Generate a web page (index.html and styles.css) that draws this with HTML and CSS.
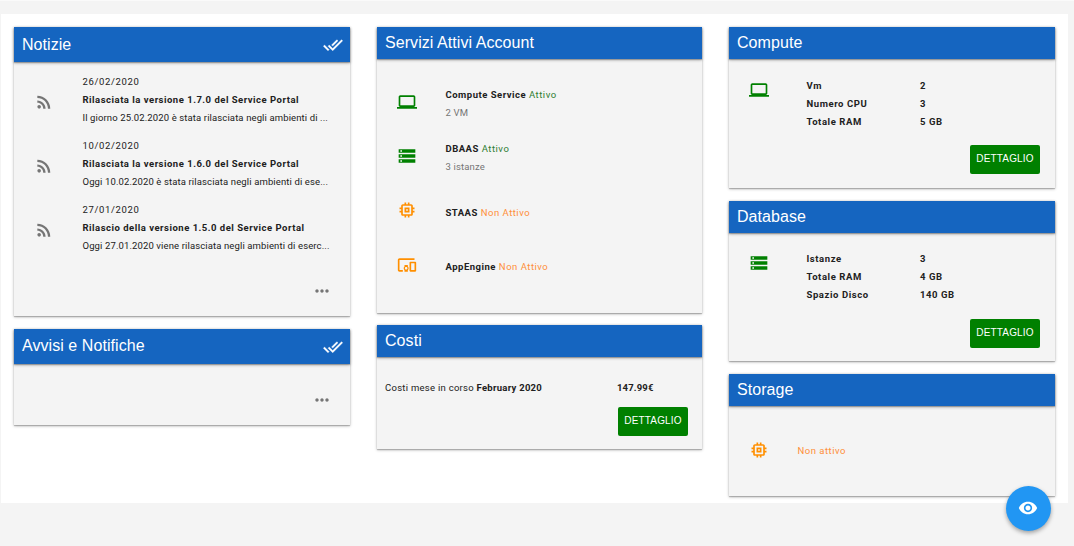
FILE: index.html
```html
<!DOCTYPE html>
<html lang="it">
<head>
<meta charset="utf-8">
<title>Service Portal</title>
<link rel="stylesheet" href="styles.css">
</head>
<body>
<svg class="defs" aria-hidden="true">
  <symbol id="done-all" viewBox="0 0 24 24"><path d="M18 7l-1.41-1.41-6.34 6.34 1.41 1.41L18 7zm4.24-1.41L11.66 16.17 7.48 12l-1.41 1.41L11.66 19l12-12-1.42-1.41zM.41 13.41L6 19l1.41-1.41L1.83 12 .41 13.41z"/></symbol>
  <symbol id="rss" viewBox="0 0 24 24"><circle cx="6.18" cy="17.82" r="2.18"/><path d="M4 4.44v2.83c7.03 0 12.73 5.7 12.73 12.73h2.83c0-8.59-6.97-15.56-15.56-15.56zm0 5.66v2.83c3.9 0 7.07 3.17 7.07 7.07h2.83c0-5.47-4.43-9.9-9.9-9.9z"/></symbol>
  <symbol id="more" viewBox="0 0 24 24"><path d="M6 10c-1.1 0-2 .9-2 2s.9 2 2 2 2-.9 2-2-.9-2-2-2zm12 0c-1.1 0-2 .9-2 2s.9 2 2 2 2-.9 2-2-.9-2-2-2zm-6 0c-1.1 0-2 .9-2 2s.9 2 2 2 2-.9 2-2-.9-2-2-2z"/></symbol>
  <symbol id="computer" viewBox="0 0 24 24"><path d="M20 18c1.1 0 1.99-.9 1.99-2L22 6c0-1.1-.9-2-2-2H4c-1.1 0-2 .9-2 2v10c0 1.1.9 2 2 2H0v2h24v-2h-4zM4 6h16v10H4V6z"/></symbol>
  <symbol id="storage" viewBox="0 0 24 24"><path d="M2 20h20v-4H2v4zm2-3h2v2H4v-2zM2 4v4h20V4H2zm4 3H4V5h2v2zm-4 7h20v-4H2v4zm2-3h2v2H4v-2z"/></symbol>
  <symbol id="memory" viewBox="0 0 24 24"><path d="M15 9H9v6h6V9zm-2 4h-2v-2h2v2zm8-2V9h-2V7c0-1.1-.9-2-2-2h-2V3h-2v2h-2V3H9v2H7c-1.1 0-2 .9-2 2v2H3v2h2v2H3v2h2v2c0 1.1.9 2 2 2h2v2h2v-2h2v2h2v-2h2c1.1 0 2-.9 2-2v-2h2v-2h-2v-2h2zm-4 6H7V7h10v10z"/></symbol>
  <symbol id="devices" viewBox="0 0 24 24"><path d="M3 6h18V4H3c-1.1 0-2 .9-2 2v12c0 1.1.9 2 2 2h4v-2H3V6zm10 6H9v1.78c-.61.55-1 1.33-1 2.22s.39 1.67 1 2.22V20h4v-1.78c.61-.55 1-1.34 1-2.22s-.39-1.67-1-2.22V12zm-2 5.5c-.83 0-1.5-.67-1.5-1.5s.67-1.5 1.5-1.5 1.5.67 1.5 1.5-.67 1.5-1.5 1.5zM22 8h-6c-.5 0-1 .5-1 1v10c0 .5.5 1 1 1h6c.5 0 1-.5 1-1V9c0-.5-.5-1-1-1zm-1 10h-4v-8h4v8z"/></symbol>
  <symbol id="eye" viewBox="0 0 24 24"><path d="M12 4.5C7 4.5 2.73 7.61 1 12c1.73 4.39 6 7.5 11 7.5s9.27-3.11 11-7.5c-1.73-4.39-6-7.5-11-7.5zM12 17c-2.76 0-5-2.24-5-5s2.24-5 5-5 5 2.24 5 5-2.24 5-5 5zm0-8c-1.66 0-3 1.34-3 3s1.34 3 3 3 3-1.34 3-3-1.34-3-3-3z"/></symbol>
</svg>
<main class="panel">
  <div class="column column-news">
    <section class="card card-news">
      <header class="card-head tall"><h2>Notizie</h2><svg class="icon"><use href="#done-all"/></svg></header>
      <div class="news-list">
        <article class="news"><svg class="icon"><use href="#rss"/></svg><div class="news-text"><time>26/02/2020</time><b>Rilasciata la versione 1.7.0 del Service Portal</b><p>Il giorno 25.02.2020 è stata rilasciata negli ambienti di ...</p></div></article>
        <article class="news"><svg class="icon"><use href="#rss"/></svg><div class="news-text"><time>10/02/2020</time><b>Rilasciata la versione 1.6.0 del Service Portal</b><p>Oggi 10.02.2020 è stata rilasciata negli ambienti di ese...</p></div></article>
        <article class="news"><svg class="icon"><use href="#rss"/></svg><div class="news-text"><time>27/01/2020</time><b>Rilascio della versione 1.5.0 del Service Portal</b><p>Oggi 27.01.2020 viene rilasciata negli ambienti di eserc...</p></div></article>
      </div>
      <footer class="card-more"><svg class="icon"><use href="#more"/></svg></footer>
    </section>
    <section class="card card-alerts">
      <header class="card-head tall"><h2>Avvisi e Notifiche</h2><svg class="icon"><use href="#done-all"/></svg></header>
      <footer class="card-more"><svg class="icon"><use href="#more"/></svg></footer>
    </section>
  </div>
  <div class="column column-services">
    <section class="card card-services">
      <header class="card-head"><h2>Servizi Attivi Account</h2></header>
      <ul class="services">
        <li class="service on"><svg class="icon"><use href="#computer"/></svg><div><p><b>Compute Service</b> <span class="state">Attivo</span></p><p class="count">2 VM</p></div></li>
        <li class="service on"><svg class="icon"><use href="#storage"/></svg><div><p><b>DBAAS</b> <span class="state">Attivo</span></p><p class="count">3 istanze</p></div></li>
        <li class="service off"><svg class="icon"><use href="#memory"/></svg><p class="single"><b>STAAS</b> <span class="state">Non Attivo</span></p></li>
        <li class="service off"><svg class="icon"><use href="#devices"/></svg><p class="single"><b>AppEngine</b> <span class="state">Non Attivo</span></p></li>
      </ul>
    </section>
    <section class="card card-costs">
      <header class="card-head"><h2>Costi</h2></header>
      <div class="cost"><p class="cost-label">Costi mese in corso <b>February 2020</b></p><p class="cost-value">147.99€</p></div>
      <a class="button">DETTAGLIO</a>
    </section>
  </div>
  <div class="column column-resources">
    <section class="card card-compute">
      <header class="card-head"><h2>Compute</h2></header>
      <div class="resource on"><svg class="icon"><use href="#computer"/></svg><dl><dt>Vm</dt><dd>2</dd><dt>Numero CPU</dt><dd>3</dd><dt>Totale RAM</dt><dd>5 GB</dd></dl></div>
      <a class="button">DETTAGLIO</a>
    </section>
    <section class="card card-database">
      <header class="card-head"><h2>Database</h2></header>
      <div class="resource on"><svg class="icon"><use href="#storage"/></svg><dl><dt>Istanze</dt><dd>3</dd><dt>Totale RAM</dt><dd>4 GB</dd><dt>Spazio Disco</dt><dd>140 GB</dd></dl></div>
      <a class="button">DETTAGLIO</a>
    </section>
    <section class="card card-storage">
      <header class="card-head"><h2>Storage</h2></header>
      <div class="resource off"><svg class="icon"><use href="#memory"/></svg><p class="state">Non attivo</p></div>
    </section>
  </div>
</main>
<button class="fab" aria-label="Mostra"><svg class="icon"><use href="#eye"/></svg></button>
</body>
</html>
```
FILE: styles.css
```css
* { box-sizing: border-box; margin: 0; padding: 0; }
body {
  height: 546px;
  overflow: hidden;
  padding: 13px 6px 0 1px;
  border-top: 1px solid #fafafa;
  background: #f4f4f4;
  color: #212121;
  font: 9.5px/18px Roboto, sans-serif;
  letter-spacing: 0.5px;
}
.defs { display: none; }
.icon { display: block; flex: none; width: 20px; height: 20px; fill: currentColor; }
b { font-weight: 700; }

.panel {
  display: flex;
  align-items: flex-start;
  gap: 27px;
  height: 489px;
  padding: 13px;
  background: #fff;
}
.column { display: flex; flex-direction: column; flex: none; gap: 13px; }
.column-news { width: 336px; }
.column-services { width: 325px; gap: 12px; }
.column-resources { width: 326px; }

.card {
  display: flex;
  flex-direction: column;
  background: #f4f4f4;
  box-shadow: 0 1px 3px rgba(0, 0, 0, .26), 0 1px 1px rgba(0, 0, 0, .2);
}
.card-news { height: 289px; }
.card-alerts { height: 96px; }
.card-services { height: 286px; }
.card-costs { height: 124px; }
.card-compute { height: 161px; }
.card-database { height: 160px; }
.card-storage { height: 122px; }

.card-head {
  display: flex;
  justify-content: space-between;
  flex: none;
  height: 32px;
  padding: 0 7.5px 0 8px;
  background: #1565c0;
  color: #fff;
  box-shadow: 0 1px 3px rgba(0, 0, 0, .3), 0 1px 1px rgba(0, 0, 0, .22);
}
.card-head h2 { font: 400 16px/31px "Liberation Sans", Arial, sans-serif; letter-spacing: .06px; }
.card-head.tall { height: 35px; }
.card-head.tall h2 { line-height: 34px; }
.card-news .card-head h2 { line-height: 36px; }
.card-head .icon { margin-top: 7.5px; stroke: currentColor; stroke-width: .4px; }

.news-list { display: flex; flex-direction: column; gap: 10px; padding: 11px 0 0 20px; }
.news { display: flex; gap: 28.5px; }
.news .icon { margin-top: 19px; color: #757575; }
.news-text { display: flex; flex-direction: column; }
.news-text time { letter-spacing: .65px; }
.news-text p { letter-spacing: .12px; white-space: nowrap; }
.card-more { display: flex; justify-content: flex-end; margin-top: auto; padding: 0 18.5px 15.5px 0; color: #757575; }

.services { list-style: none; padding: 27px 0 0 20px; }
.service { display: flex; gap: 28.5px; height: 54px; }
.service .icon { margin-top: 6px; }
.service:last-child .icon { margin-top: 7px; }
.service .single { margin-top: 10px; }
.on .icon { color: #008000; }
.on .state { color: #2e7d32; }
.off .icon { color: #ff8f00; }
.off .state { color: #ff8f39; }
.count { color: #757575; letter-spacing: .15px; }

.cost { display: flex; padding: 22px 8px 0; letter-spacing: .27px; }
.cost-label { width: 232px; }
.cost-value { font-weight: 700; letter-spacing: .15px; }
.button {
  align-self: flex-end;
  height: 29px;
  width: 70px;
  margin: auto 15px 14px 0;
  border-radius: 2px;
  background: #008000;
  color: #fff;
  font: 10px/27px "Liberation Sans", Arial, sans-serif;
  letter-spacing: .15px;
  text-align: center;
}
.card-costs .button { margin: auto 14px 13px 0; }
.card-database .button { margin-bottom: 13px; }

.resource { display: flex; padding: 18px 0 0 20px; }
.resource .icon { margin-top: 2.5px; }
.resource dl { display: grid; grid-template-columns: 113.5px auto; margin-left: 37.5px; font-weight: 700; letter-spacing: .58px; }
.card-database .resource { padding-top: 17px; }
.card-storage .resource { padding-top: 31px; }
.card-storage .state { margin: 5px 0 0 28.5px; }

.fab {
  position: fixed;
  right: 23px;
  bottom: 15px;
  display: flex;
  align-items: center;
  justify-content: center;
  width: 45px;
  height: 45px;
  padding: 0 1px 1px 0;
  border: 0;
  border-radius: 50%;
  background: #2196f3;
  color: #fff;
  box-shadow: 0 2px 4px rgba(0, 0, 0, .35);
}
```
